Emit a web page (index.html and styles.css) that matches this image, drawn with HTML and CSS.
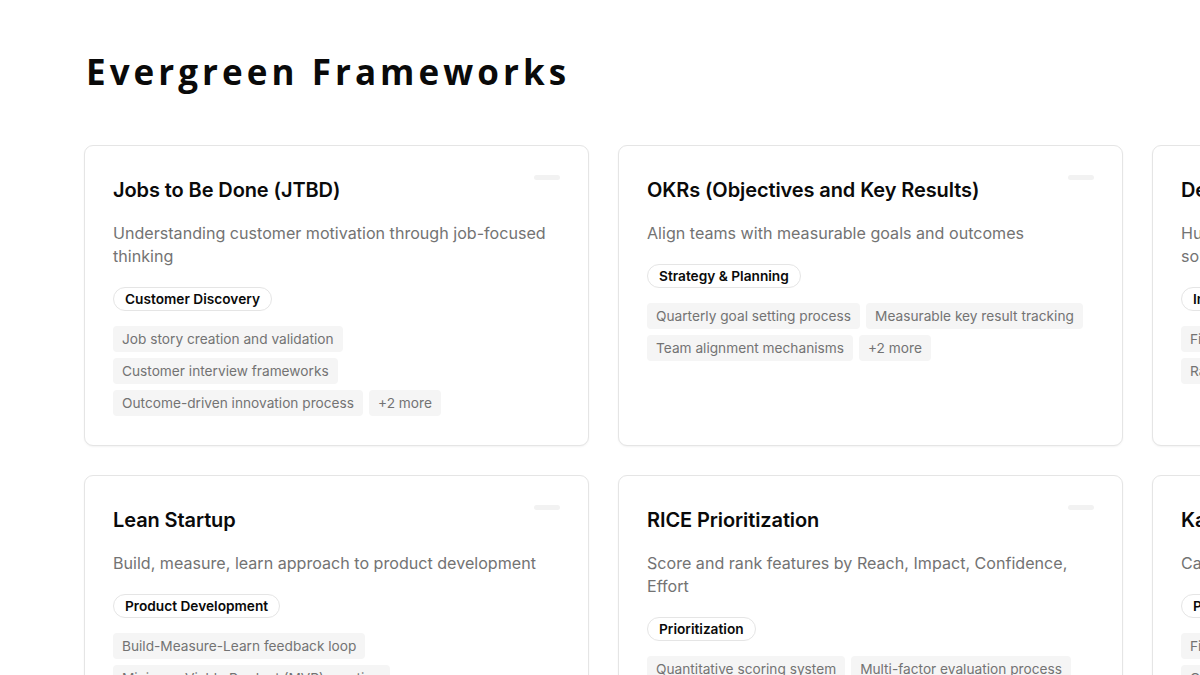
FILE: index.html
```html
<!DOCTYPE html>
<html>
<head>
<meta charset="utf-8">
<link rel="stylesheet" href="styles.css">
</head>
<body>
<main class="page">
  <h1 class="page-title">Evergreen Frameworks</h1>
  <div class="grid">
    <article class="card">
      <div class="card-head"><h2 class="card-title">Jobs to Be Done (JTBD)</h2><span class="card-pill"></span></div>
      <p class="card-desc">Understanding customer motivation through job-focused thinking</p>
      <span class="badge">Customer Discovery</span>
      <div class="tags">
        <span class="tag">Job story creation and validation</span>
        <span class="tag">Customer interview frameworks</span>
        <span class="tag">Outcome-driven innovation process</span>
        <span class="tag">+2 more</span>
      </div>
    </article>
    <article class="card">
      <div class="card-head"><h2 class="card-title">OKRs (Objectives and Key Results)</h2><span class="card-pill"></span></div>
      <p class="card-desc">Align teams with measurable goals and outcomes</p>
      <span class="badge">Strategy &amp; Planning</span>
      <div class="tags">
        <span class="tag">Quarterly goal setting process</span>
        <span class="tag">Measurable key result tracking</span>
        <span class="tag">Team alignment mechanisms</span>
        <span class="tag">+2 more</span>
      </div>
    </article>
    <article class="card">
      <div class="card-head"><h2 class="card-title">Design Thinking</h2><span class="card-pill"></span></div>
      <p class="card-desc">Human-centered approach to innovation and problem solving</p>
      <span class="badge">Innovation</span>
      <div class="tags">
        <span class="tag">Five-stage process: Empathize, Define, Ideate, Prototype</span>
        <span class="tag">Rapid prototyping and user testing methods</span>
      </div>
    </article>
    <article class="card">
      <div class="card-head"><h2 class="card-title">Lean Startup</h2><span class="card-pill"></span></div>
      <p class="card-desc">Build, measure, learn approach to product development</p>
      <span class="badge">Product Development</span>
      <div class="tags">
        <span class="tag">Build-Measure-Learn feedback loop</span>
        <span class="tag">Minimum Viable Product (MVP) creation</span>
        <span class="tag">Validated learning through experimentation</span>
        <span class="tag">+2 more</span>
      </div>
    </article>
    <article class="card">
      <div class="card-head"><h2 class="card-title">RICE Prioritization</h2><span class="card-pill"></span></div>
      <p class="card-desc">Score and rank features by Reach, Impact, Confidence, Effort</p>
      <span class="badge">Prioritization</span>
      <div class="tags">
        <span class="tag">Quantitative scoring system</span>
        <span class="tag">Multi-factor evaluation process</span>
        <span class="tag">+2 more</span>
      </div>
    </article>
    <article class="card">
      <div class="card-head"><h2 class="card-title">Kano Model</h2><span class="card-pill"></span></div>
      <p class="card-desc">Categorize features by customer satisfaction impact</p>
      <span class="badge">Prioritization</span>
      <div class="tags">
        <span class="tag">Five feature categories: basic, performance, excitement</span>
        <span class="tag">Customer satisfaction survey design</span>
      </div>
    </article>
  </div>
</main>
</body>
</html>
```

FILE: styles.css
```css
* { box-sizing: border-box; }
html, body { margin: 0; padding: 0; background: #ffffff; overflow: hidden; }
body { font-family: "Inter", "Liberation Sans", sans-serif; color: #0a0a0a; }
.page { padding: 48px 0 0 84px; width: 1700px; }
.page-title {
  margin: 0 0 49px 2px;
  font-family: "Open Sans", "Lato", sans-serif;
  font-size: 35px;
  font-weight: 700;
  letter-spacing: 4.05px;
  line-height: 48px;
  color: #0a0a0a;
}
.grid {
  display: grid;
  grid-template-columns: repeat(3, 505px);
  column-gap: 29px;
  row-gap: 29px;
}
.card {
  border: 1px solid #e5e5e5;
  border-radius: 9px;
  background: #fff;
  padding: 30px 28px 28px 28px;
  box-shadow: 0 1px 2px rgba(0,0,0,0.05);
  display: flex;
  flex-direction: column;
  align-items: flex-start;
  min-height: 301px;
}
.card-head {
  display: flex;
  justify-content: space-between;
  align-items: flex-start;
  width: 100%;
}
.card-title {
  margin: 0;
  font-size: 20px;
  font-weight: 600;
  line-height: 28px;
  letter-spacing: -0.1px;
  color: #0a0a0a;
}
.card-pill {
  width: 26px;
  height: 5px;
  margin-top: -1px;
  border-radius: 3px;
  background: #f2f2f2;
  flex: none;
}
.card-desc {
  margin: 18px 0 19px;
  font-size: 16.1px;
  line-height: 23px;
  color: #737373;
}
.badge {
  display: inline-block;
  border: 1px solid #e5e5e5;
  border-radius: 999px;
  padding: 0 11px;
  font-size: 13.7px;
  font-weight: 600;
  line-height: 22px;
  color: #0a0a0a;
}
.tags {
  margin-top: 15px;
  display: flex;
  flex-wrap: wrap;
  gap: 6px 6px;
}
.tag {
  background: #f5f5f5;
  border-radius: 4px;
  padding: 0 9px;
  font-size: 13.7px;
  line-height: 26px;
  color: #737373;
}
```
